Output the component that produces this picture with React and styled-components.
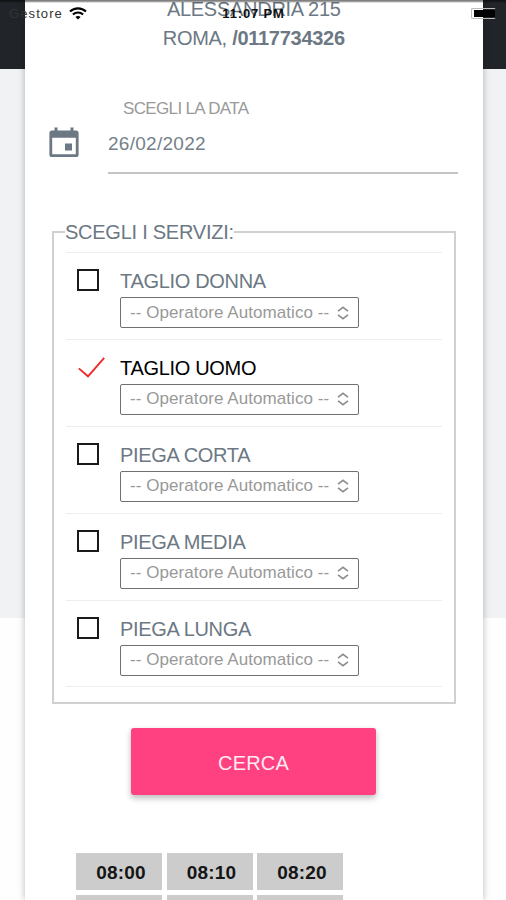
import React, { useState } from "react";
import styled, { createGlobalStyle } from "styled-components";

const services = [
  "TAGLIO DONNA",
  "TAGLIO UOMO",
  "PIEGA CORTA",
  "PIEGA MEDIA",
  "PIEGA LUNGA",
];

const slots = ["08:00", "08:10", "08:20", "08:30", "08:40", "08:50"];

function App() {
  const [selected, setSelected] = useState("TAGLIO UOMO");

  return (
    <Page>
      <GlobalStyle />
      {/* phone status bar, floats over the scrolled content */}
      <StatusBar>
        <Carrier>
          <span>Gestore</span>
          <WifiIcon />
        </Carrier>
        <Clock>11:07 PM</Clock>
        <Battery />
      </StatusBar>

      <Card>
        <Address>
          <AddressLine>ALESSANDRIA 215</AddressLine>
          <AddressLine>
            ROMA, <b>/0117734326</b>
          </AddressLine>
        </Address>

        <DateRow>
          <CalendarIcon />
          <DateField>
            <DateLabel>SCEGLI LA DATA</DateLabel>
            <DateValue>26/02/2022</DateValue>
          </DateField>
        </DateRow>

        <Services>
          <Legend>SCEGLI I SERVIZI:</Legend>
          <ServiceList>
            {services.map((name) => (
              <Service key={name} onClick={() => setSelected(name)}>
                {selected === name ? <CheckIcon /> : <Checkbox />}
                <ServiceBody>
                  <ServiceName $active={selected === name}>{name}</ServiceName>
                  <Select>
                    <span>-- Operatore Automatico --</span>
                    <ChevronsIcon />
                  </Select>
                </ServiceBody>
              </Service>
            ))}
          </ServiceList>
        </Services>

        <SearchButton>CERCA</SearchButton>

        <Slots>
          {slots.map((time) => (
            <Slot key={time}>{time}</Slot>
          ))}
        </Slots>
      </Card>
    </Page>
  );
}

// icons
const WifiIcon = () => (
  <svg width="18" height="13" viewBox="0 0 18 13" fill="none">
    <path d="M1 4.6C5.4 0.3 12.6 0.3 17 4.6" stroke="#000" strokeWidth="2.1" />
    <path d="M3.9 7.6C6.8 4.9 11.2 4.9 14.1 7.6" stroke="#000" strokeWidth="2" />
    <path d="M9 12.6L6.4 10C7.8 8.7 10.2 8.7 11.6 10Z" fill="#000" />
  </svg>
);

const CalendarIcon = () => (
  <CalendarSvg width="30" height="31" viewBox="0 0 30 31">
    <path
      fill="#6c7883"
      fillRule="evenodd"
      d="M5.5 0.5h3v3h13v-3h3v3H27a2.6 2.6 0 0 1 2.6 2.6v21.3A2.6 2.6 0 0 1 27 30H3A2.6 2.6 0 0 1 0.4 27.4V6.1A2.6 2.6 0 0 1 3 3.5h2.5zM3.2 10.8v16.4h23.6V10.8zM16 16.5h7v7h-7z"
    />
  </CalendarSvg>
);

const CheckIcon = () => (
  <CheckSvg width="27" height="21" viewBox="0 0 27 21" fill="none">
    <path d="M0.8 11.4L10 19.3L26.2 0.8" stroke="#f02a2a" strokeWidth="1.9" />
  </CheckSvg>
);

const ChevronsIcon = () => (
  <svg width="12" height="14" viewBox="0 0 12 14" fill="none">
    <path
      d="M1 5.2L6 1.3L11 5.2M1 8.8L6 12.7L11 8.8"
      stroke="#8d8d8d"
      strokeWidth="1.6"
    />
  </svg>
);

export default App;

// Styling
const GlobalStyle = createGlobalStyle`
  * {
    box-sizing: border-box;
  }
  body {
    margin: 0;
    overflow: hidden;
    font-family: "Liberation Sans", Arial, sans-serif;
  }
`;

const Page = styled.div`
  position: relative;
  height: 900px;
  overflow: hidden;
  padding: 0 23.500px 0 25px;
  background: linear-gradient(
    #212529 0 69px,
    #f1f2f4 69px 618px,
    #fefefe 618px
  );
`;

const StatusBar = styled.div`
  position: absolute;
  z-index: 1;
  top: 0;
  left: 0;
  right: 0;
  height: 26px;
  padding: 0 9px;
  display: grid;
  grid-template-columns: 1fr auto 1fr;
  align-items: center;
  font-size: 13px;
  color: #111;
  background: linear-gradient(rgba(0, 0, 0, 0.5) 0 1px, transparent 3px);
`;

const Carrier = styled.div`
  display: flex;
  align-items: center;
  gap: 6px;
  letter-spacing: 1.1px;
  color: #333;
`;

const Clock = styled.div`
  font-weight: bold;
  letter-spacing: 0.85px;
  padding-left: 1px;
`;

const Battery = styled.div`
  justify-self: end;
  width: 25px;
  height: 11px;
  border: 1px solid #bbb;
  border-right-color: transparent;
  border-radius: 2px;
  padding: 1px 0 1px 2px;
  margin-right: 1px;

  &::before {
    content: "";
    display: block;
    height: 7px;
    background: #000;
  }
`;

const Card = styled.main`
  height: 100%;
  padding: 0 27px;
  overflow: hidden;
  background: #fff;
  box-shadow: 0 0 7px rgba(0, 0, 0, 0.28);
`;

const Address = styled.div`
  margin-top: -5px;
  text-align: center;
  font-size: 20px;
  line-height: 29px;
  letter-spacing: -0.28px;
  color: #6c7883;
`;

const AddressLine = styled.div`
  white-space: nowrap;
`;

const DateRow = styled.div`
  display: flex;
  gap: 29px;
  height: 78px;
  margin: 43px -2px 0 -3px;
`;

const CalendarSvg = styled.svg`
  margin-top: 31px;
`;

const DateField = styled.div`
  flex: 1;
  border-bottom: 2px solid #c4c4c4;
`;

const DateLabel = styled.div`
  padding: 2px 0 0 15px;
  font-size: 17px;
  line-height: 22px;
  letter-spacing: -0.65px;
  color: #999;
`;

const DateValue = styled.div`
  padding-top: 12px;
  font-size: 19px;
  line-height: 24px;
  letter-spacing: 0.28px;
  color: #747f8a;
`;

const Services = styled.fieldset`
  height: 484px;
  margin: 46px 0 0;
  padding: 0 12px;
  border: 2px solid #d0d0d0;
`;

const Legend = styled.legend`
  margin-left: -1px;
  padding: 0;
  font-size: 20px;
  line-height: 24px;
  letter-spacing: -0.25px;
  color: #6c7883;
`;

const ServiceList = styled.div`
  margin-top: 8px;
  border-top: 1px solid #eee;
`;

const Service = styled.div`
  display: grid;
  grid-template-columns: 54px 1fr;
  height: 86.900px;
  padding-top: 16px;
  border-bottom: 1px solid #eee;
`;

const Checkbox = styled.span`
  width: 22px;
  height: 22px;
  margin-left: 11px;
  border: 2px solid #1a1a1a;
`;

const CheckSvg = styled.svg`
  margin: 1px 0 0 12px;
`;

const ServiceBody = styled.div`
  display: flex;
  flex-direction: column;
  align-items: flex-start;
`;

const ServiceName = styled.div`
  padding-bottom: 3px;
  font-size: 20px;
  line-height: 25px;
  letter-spacing: -0.32px;
  color: ${(props) => (props.$active ? "#000" : "#6c7883")};
`;

const Select = styled.div`
  display: flex;
  align-items: center;
  gap: 8px;
  width: 239px;
  height: 31px;
  padding-left: 9px;
  border: 1px solid #707070;
  border-radius: 2px;
  font-size: 17px;
  letter-spacing: 0.07px;
  white-space: nowrap;
  color: #999;
`;

const SearchButton = styled.button`
  display: block;
  width: 245px;
  height: 67px;
  margin: 24px auto 0 79px;
  padding: 3px 0 0;
  border: none;
  border-radius: 3px;
  font-family: inherit;
  font-size: 20px;
  letter-spacing: 0.2px;
  color: #ffeaf2;
  background: #ff4081;
  box-shadow: 0 3px 6px rgba(0, 0, 0, 0.28);
`;

const Slots = styled.div`
  display: grid;
  grid-template-columns: repeat(3, 86px);
  gap: 5px 4.500px;
  margin: 58px 0 0 24px;
`;

const Slot = styled.div`
  height: 37px;
  padding-left: 4px;
  text-align: center;
  font-size: 19px;
  font-weight: bold;
  line-height: 39px;
  letter-spacing: 0.2px;
  color: #151515;
  background: #ccc;
`;
